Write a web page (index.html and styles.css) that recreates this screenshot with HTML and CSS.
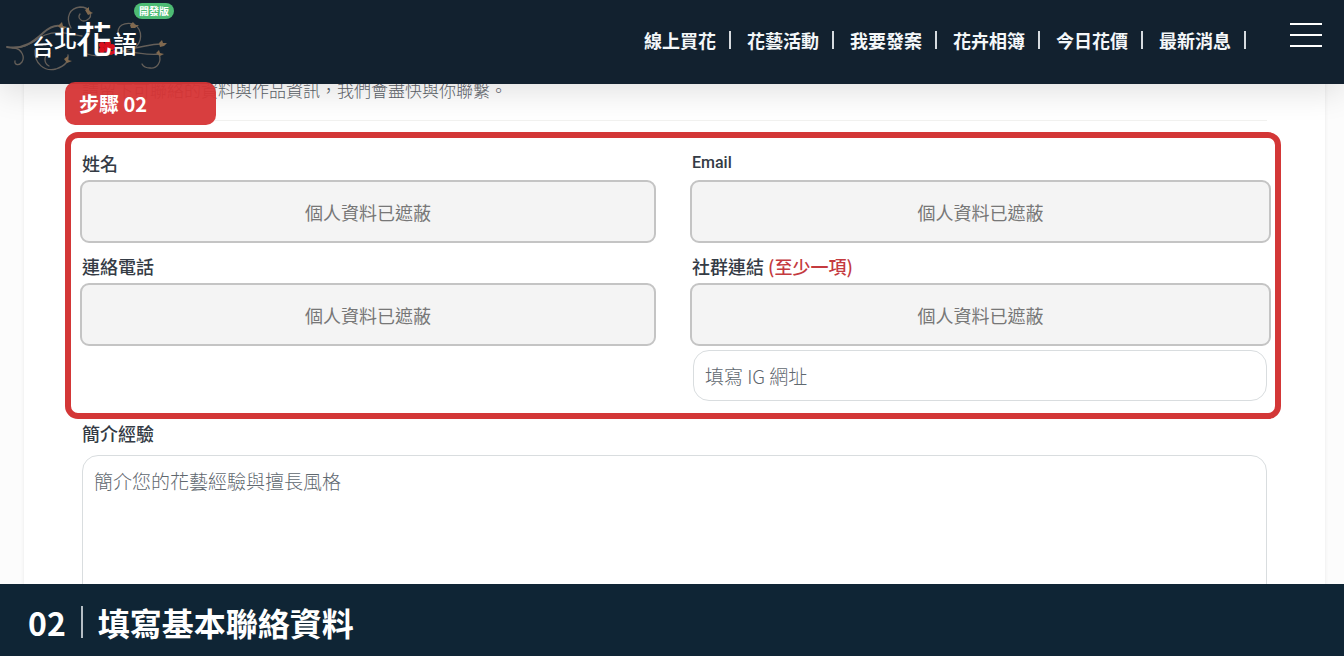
FILE: index.html
```html
<!DOCTYPE html>
<html lang="zh-Hant">
<head>
<meta charset="utf-8">
<meta name="viewport" content="width=device-width, initial-scale=1">
<title>台北花語</title>
<link rel="stylesheet" href="styles.css">
</head>
<body>
<header class="site-header">
  <a class="brand" href="#" aria-label="台北花語">
    <svg class="brand-logo" viewBox="0 0 180 84" width="180" height="84">
      <g class="vines">
        <path d="M7 47C24 50 34 41 43 33C51 26 57 24 63 27" stroke-width="2"/>
        <path d="M12 48C27 49 34 40 45 35C58 30 70 34 82 36"/>
        <path d="M14 48C22 49 25 57 22 62C19 66 14 65 15 61"/>
        <path d="M71 28C65 17 70 8 80 7C90 7 94 16 87 20C82 23 77 18 80 14"/>
        <path d="M35 50C34 64 45 72 56 69C65 66 69 61 68 55M49 66C43 63 44 54 50 53"/>
        <path d="M87 54C105 61 131 45 161 44"/>
        <path d="M112 52C132 50 145 56 159 54C162 62 157 69 150 68C146 68 143 66 142 64"/>
        <path d="M118 35C117 25 124 22 134 24C143 30 143 43 133 49"/>
      </g>
      <g class="leaves">
        <path d="M58 26l4-4 1 4 4 1-5 3zM85 10l4-3v4l4 2-5 2zM130 25l3-3 2 3 4 0-4 3-4 0zM159 43l3-3 1 3 4 0-3 3-4 1zM156 53l3-3 1 3 4 1-4 2zM64 59l4-3v4l4 1-5 2z"/>
      </g>
      <g class="blossom">
        <circle cx="102" cy="45" r="3"/><circle cx="108" cy="43" r="3"/><circle cx="112" cy="47" r="3"/>
        <circle cx="108" cy="50" r="3"/><circle cx="102" cy="50" r="3"/><circle cx="107" cy="47" r="3"/>
        <circle cx="114" cy="52" r="2"/><circle cx="111" cy="53" r="2"/>
      </g>
      <g class="brand-text">
        <text x="32" y="55" font-size="22">台</text>
        <text x="54" y="47" font-size="23">北</text>
        <text x="76" y="53" font-size="36">花</text>
        <text x="113" y="53" font-size="24">語</text>
      </g>
    </svg>
    <span class="badge">開發版</span>
  </a>
  <nav class="main-nav">
    <a href="#">線上買花</a>
    <a href="#">花藝活動</a>
    <a href="#">我要發案</a>
    <a href="#">花卉相簿</a>
    <a href="#">今日花價</a>
    <a href="#">最新消息</a>
  </nav>
  <button class="menu-button" type="button" aria-label="選單"><i></i><i></i><i></i></button>
</header>

<main class="page">
  <form class="card">
    <p class="intro">請留下可聯絡的資料與作品資訊，我們會盡快與你聯繫。</p>
    <strong class="step-tag">步驟 02</strong>
    <section class="contact-frame">
      <div class="field">
        <label for="name">姓名</label>
        <input class="masked" id="name" type="text" value="個人資料已遮蔽" readonly>
      </div>
      <div class="field">
        <label class="latin" for="email">Email</label>
        <input class="masked" id="email" type="text" value="個人資料已遮蔽" readonly>
      </div>
      <div class="field">
        <label for="phone">連絡電話</label>
        <input class="masked" id="phone" type="text" value="個人資料已遮蔽" readonly>
      </div>
      <div class="field">
        <label for="social">社群連結 <span class="required">(至少一項)</span></label>
        <input class="masked" id="social" type="text" value="個人資料已遮蔽" readonly>
        <input class="text-box" type="text" placeholder="填寫 IG 網址" aria-label="IG 網址">
      </div>
    </section>
    <div class="bio">
      <label for="bio">簡介經驗</label>
      <textarea class="text-box" id="bio" rows="6" placeholder="簡介您的花藝經驗與擅長風格"></textarea>
    </div>
  </form>
</main>

<footer class="caption">
  <span>02</span>
  <h1>填寫基本聯絡資料</h1>
</footer>
</body>
</html>
```
FILE: styles.css
```css
* { box-sizing: border-box; }

body {
  margin: 0;
  height: 100vh;
  display: flex;
  flex-direction: column;
  background: #fcfcfc;
  color: #343b45;
  font-family: "Noto Sans CJK TC", sans-serif;
  overflow: hidden;
}

.site-header {
  position: relative;
  z-index: 1;
  flex: none;
  display: flex;
  align-items: center;
  height: 84px;
  padding-right: 22px;
  background: #12212f;
  box-shadow: 0 8px 32px rgba(0, 0, 0, 0.12);
}

.brand {
  position: relative;
  margin-right: auto;
  color: #fff;
}
.brand-logo { display: block; }
.vines { fill: none; stroke: #655f59; stroke-width: 1.3; stroke-linecap: round; }
.leaves { fill: #80694f; }
.blossom { fill: #d8101c; }
.brand-text { fill: #fff; font-weight: 500; }
.badge {
  position: absolute;
  left: 134px;
  top: 3px;
  padding: 0 5px;
  border-radius: 8px;
  background: #4dbb74;
  font-size: 10px;
  line-height: 16px;
  font-weight: 700;
  white-space: nowrap;
}

.main-nav { display: flex; gap: 16px; }
.main-nav a {
  display: flex;
  align-items: center;
  gap: 13px;
  color: #f4f7f9;
  font-size: 18px;
  line-height: 24px;
  font-weight: 700;
  text-decoration: none;
  white-space: nowrap;
  padding-bottom: 4px;
}
.main-nav a::after {
  content: "";
  width: 2px;
  height: 18px;
  background: #d5dade;
}

.menu-button {
  display: flex;
  flex-direction: column;
  gap: 9px;
  width: 32px;
  margin: 0 0 14px 44px;
  padding: 0;
  border: 0;
  background: none;
}
.menu-button i { height: 2px; background: #fff; }

.page {
  flex: 1;
  min-height: 0;
  padding: 0 19px 0 24px;
}

.card {
  position: relative;
  margin-top: -6px;
  padding: 0 44px 24px 41px;
  background: #fff;
  box-shadow: 0 0 4px rgba(0, 0, 0, 0.08);
}

.intro {
  margin: 0 14px 11px 17px;
  padding-bottom: 18px;
  border-bottom: 1px solid #f1f1ef;
  color: #5d636a;
  font-size: 17px;
  line-height: 24px;
  font-weight: 300;
}

.step-tag {
  position: absolute;
  z-index: 2;
  left: 41px;
  top: 4px;
  min-width: 151px;
  padding: 8px 14px 7px;
  border-radius: 10px;
  background: rgba(214, 52, 53, 0.95);
  color: #fff;
  font-size: 20px;
  line-height: 28px;
}

.contact-frame {
  display: grid;
  grid-template-columns: 576fr 581fr;
  gap: 12px 34px;
  padding: 14px 4px 12px 9px;
  border: 6px solid #d33737;
  border-radius: 13px;
}

.field { display: flex; flex-direction: column; }

label {
  display: block;
  padding-left: 2px;
  margin-bottom: 6px;
  font-size: 18px;
  line-height: 22px;
  font-weight: 500;
}
.latin { font-family: Roboto, sans-serif; font-size: 16px; }
.required { color: #c43a3f; }

.masked {
  width: 100%;
  height: 63px;
  padding: 0;
  border: 2px solid #c4c4c4;
  border-radius: 9px;
  background: #f4f4f4;
  color: #777;
  font: 400 18px/24px "Noto Sans CJK TC", sans-serif;
  text-align: center;
}

.text-box {
  padding: 11px;
  border: 1px solid #d9dddf;
  border-radius: 16px;
  background: #fff;
  color: #343b45;
  font: 300 19px/28px "Noto Sans CJK TC", sans-serif;
}
.text-box::placeholder { color: #5f686f; opacity: 1; }
.field .text-box { margin: 4px 4px 0 3px; height: 51px; }

.bio { padding: 3px 14px 0 17px; }
.bio label { padding: 0; margin-bottom: 11px; }
.bio .text-box { display: block; width: 100%; resize: none; }

.caption {
  position: relative;
  flex: none;
  display: flex;
  align-items: center;
  height: 72px;
  padding: 4px 28px 0;
  background: #0f2535;
  color: #fff;
  font-size: 32px;
  line-height: 48px;
  font-weight: 700;
}
.caption span {
  display: flex;
  align-items: center;
  gap: 15px;
}
.caption span::after {
  content: "";
  width: 2px;
  height: 32px;
  background: #b5bec5;
}
.caption h1 { margin: 0 0 0 15px; font-size: 32px; }
```
